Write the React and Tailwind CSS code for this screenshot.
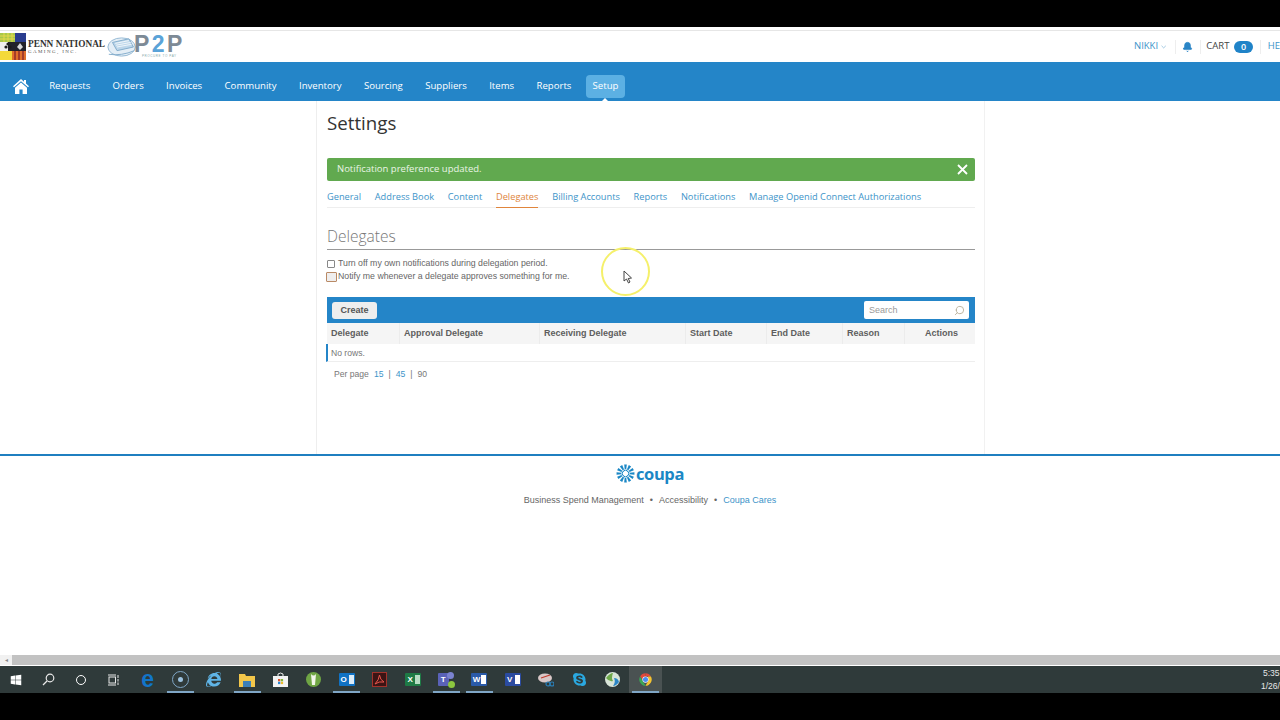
import { Bell, ChevronDown, Search } from 'lucide-react';
import { FaWindows, FaInternetExplorer, FaSkype } from 'react-icons/fa';

const navItems = ['Requests', 'Orders', 'Invoices', 'Community', 'Inventory', 'Sourcing', 'Suppliers', 'Items', 'Reports'];
const tabs = ['General', 'Address Book', 'Content', 'Delegates', 'Billing Accounts', 'Reports', 'Notifications', 'Manage Openid Connect Authorizations'];
const columns = [
  ['Delegate', 'w-[73px]'],
  ['Approval Delegate', 'w-[140px]'],
  ['Receiving Delegate', 'w-[146px]'],
  ['Start Date', 'w-[81px]'],
  ['End Date', 'w-[76px]'],
  ['Reason', 'w-[62px]'],
];

function PennLogo() {
  return (
    <svg width="26" height="27" viewBox="0 0 26 27" className="shrink-0">
      <rect width="26" height="27" fill="#f4d93a" />
      <rect x="0" y="0" width="15" height="9" fill="#a8c84a" />
      <path d="M0 3 H15 M0 6 H15 M4 0 V9 M8 0 V9 M12 0 V9" stroke="#e6d84a" strokeWidth="1" />
      <rect x="15" y="0" width="11" height="9" fill="#2a3d8f" />
      <path d="M0 9 H8 L13 18 H0 Z" fill="#f0f0f0" />
      <rect x="8" y="9" width="18" height="9" fill="#22222a" />
      <circle cx="8" cy="11" r="1.6" fill="#1c1c1c" />
      <circle cx="6" cy="14" r="1.6" fill="#1c1c1c" />
      <circle cx="10" cy="14" r="1.6" fill="#1c1c1c" />
      <path d="M20 10 L23 14 L20 17 L17 14 Z" fill="#d8d8d8" />
      <path d="M12 18 H26 V27 H12 Z" fill="#e0702a" />
      <path d="M15 18 V27 M19 18 V27 M23 18 V27" stroke="#8e2a2a" strokeWidth="1.4" />
    </svg>
  );
}

function P2PLogo() {
  return (
    <svg width="31" height="24" viewBox="0 0 34 24" className="shrink-0">
      <ellipse cx="16" cy="12" rx="15" ry="10" fill="#e4eef6" stroke="#8fb5d2" strokeWidth="1" />
      <path d="M6 7 L24 3 L29 12 L11 16 Z" fill="#bcd6ea" stroke="#7ea9c9" strokeWidth="1" />
      <path d="M9 8 L24 5 M10 10 L26 7 M11 12 L27 9" stroke="#f4f8fb" strokeWidth="1" />
      <path d="M2 20 Q16 22 30 16" fill="none" stroke="#7ea9c9" strokeWidth="1" />
    </svg>
  );
}

function CoupaMark() {
  const spokes = [0, 30, 60, 90, 120, 150, 180, 210, 240, 270, 300, 330];
  return (
    <svg width="19" height="19" viewBox="0 0 20 20" className="shrink-0">
      {spokes.map((a) => (
        <path key={a} d="M8.6 0.6 L11.4 0.6 L10.8 5.6 L9.2 5.6 Z" fill="#1b87c5" transform={`rotate(${a} 10 10)`} />
      ))}
      {spokes.map((a) => (
        <circle key={a} cx="10" cy="6.6" r="0.8" fill="#1b87c5" transform={`rotate(${a + 15} 10 10)`} />
      ))}
    </svg>
  );
}

function TaskIcon({ active, open, children }) {
  return (
    <div className={`relative flex h-full w-[33.2px] items-center justify-center ${active ? 'bg-[#4a5252]' : ''}`}>
      {children}
      {open && <div className="absolute bottom-0 left-[3px] right-[3px] h-[2px] bg-[#7fa6c6]" />}
    </div>
  );
}

function OfficeTile({ bg, letter, side = '#ffffff' }) {
  return (
    <div className="flex h-[13px] w-[16px] items-center overflow-hidden rounded-[1px]" style={{ background: bg }}>
      <span className="w-[10px] text-center text-[8px] leading-none font-bold text-white">{letter}</span>
      <div className="h-[9px] w-[5px]" style={{ background: side }} />
    </div>
  );
}

export default function App() {
  return (
    <div className="flex h-[720px] w-[1280px] flex-col overflow-hidden bg-black font-['Liberation_Sans',sans-serif]">
      <div className="h-[27px] shrink-0" />

      <div className="relative flex h-[628px] shrink-0 flex-col bg-white">
        {/* Top header */}
        <div className="mt-[3px] flex h-[32px] shrink-0 items-center justify-between overflow-hidden border-t border-[#e6e6e6]">
          <div className="flex items-center">
            <PennLogo />
            <div className="ml-[2px] flex w-[79px] flex-col">
              <span className="font-['Liberation_Serif',serif] text-[9.3px] leading-[10px] font-bold whitespace-nowrap text-[#333]">PENN NATIONAL</span>
              <span className="font-['Liberation_Serif',serif] text-[5px] leading-[6px] tracking-[1.4px] whitespace-nowrap text-[#555]">GAMING, INC.</span>
            </div>
            <P2PLogo />
            <div className="ml-[-4px] flex flex-col items-center">
              <div className="flex text-[23px] leading-[19px] font-bold tracking-[2.4px] whitespace-nowrap">
                <span className="text-[#7d8a96]">P</span>
                <span className="text-[#5aa3d8]">2</span>
                <span className="text-[#7d8a96]">P</span>
              </div>
              <span className="text-[3px] leading-[4px] tracking-[0.6px] whitespace-nowrap text-[#8aa]">PROCURE TO PAY</span>
            </div>
          </div>
          <div className="flex w-[146px] shrink-0 items-center font-['Open_Sans',sans-serif] text-[9.5px]">
            <span className="text-[#3d94c9]">NIKKI</span>
            <ChevronDown className="ml-[2px] h-[8px] w-[8px] text-[#6aa8d0]" />
            <div className="ml-[8px] h-[14px] w-px bg-[#eeeeee]" />
            <Bell className="ml-[6px] h-[12px] w-[12px] text-[#2a85c6]" fill="#2a85c6" />
            <div className="ml-[7px] h-[14px] w-px bg-[#eeeeee]" />
            <span className="ml-[5px] text-[#444]">CART</span>
            <span className="ml-[5px] flex h-[12px] w-[20px] items-center justify-center rounded-[6px] bg-[#1f83c8] text-[9px] leading-none font-semibold text-white">0</span>
            <div className="ml-[7px] h-[14px] w-px bg-[#eeeeee]" />
            <span className="ml-[7px] text-[#3d94c9]">HE</span>
          </div>
        </div>

        {/* Nav */}
        <div className="flex h-[39px] shrink-0 items-center bg-[#2485c8] pt-[9px] font-['Open_Sans',sans-serif] text-[9.6px] text-white">
          <svg width="16" height="15" viewBox="0 0 16 15" className="ml-[13px] shrink-0" fill="#fff">
            <path d="M8 0 L11 2.7 V1 H13 V4.5 L16 7.3 L15 8.2 L8 2.2 L1 8.2 L0 7.3 Z" />
            <path d="M8 3.6 L14 8.7 V15 H9.6 V10.5 H6.4 V15 H2 V8.7 Z" />
          </svg>
          <div className="ml-[9px] flex items-center">
            {navItems.map((item) => (
              <span key={item} className="px-[11.2px] whitespace-nowrap">{item}</span>
            ))}
            <div className="relative ml-[3px] flex h-[23px] items-center rounded-[4px] bg-[#5cb0e3] px-[7px]">
              Setup
              <div className="absolute bottom-[-4px] left-1/2 h-0 w-0 -translate-x-1/2 border-x-[4px] border-b-[4px] border-x-transparent border-b-white" />
            </div>
          </div>
        </div>

        {/* Page */}
        <div className="flex h-[353px] shrink-0">
          <div className="w-[317px] shrink-0 border-r border-[#eeeeee]" />
          <div className="w-[668px] shrink-0 border-r border-[#f1f1f1] pr-[9px] pl-[10px]">
            <h1 className="mt-[10px] font-['Open_Sans',sans-serif] text-[18.7px] leading-[24px] text-[#333]">Settings</h1>

            <div className="mt-[23px] flex h-[23px] items-center justify-between rounded-[2px] bg-[#61a94f] pr-[7px] pl-[10px] font-['Open_Sans',sans-serif] text-[9.5px] text-[#eaf5e6]">
              Notification preference updated.
              <svg width="11" height="11" viewBox="0 0 11 11"><path d="M1 1 L10 10 M10 1 L1 10" stroke="#fff" strokeWidth="1.8" /></svg>
            </div>

            <div className="mt-[7px] flex h-[20px] gap-[13.7px] border-b border-[#eeeeee] font-['Open_Sans',sans-serif] text-[9.25px] text-[#3d94c9]">
              {tabs.map((t) => (
                <span key={t} className={`h-[20px] leading-[18px] whitespace-nowrap ${t === 'Delegates' ? 'border-b border-[#e0853c] text-[#e0853c]' : ''}`}>{t}</span>
              ))}
            </div>

            <h2 className="mt-[18px] border-b border-[#999] pb-[3px] font-['Open_Sans',sans-serif] text-[15.5px] leading-[20px] font-light text-[#777]">Delegates</h2>

            <div className="mt-[7px] flex h-[13px] items-center text-[8.75px] text-[#666]">
              <span className="h-[8px] w-[8px] rounded-[1px] border border-[#888] bg-white" />
              <span className="ml-[3px]">Turn off my own notifications during delegation period.</span>
            </div>
            <div className="flex h-[13px] items-center text-[8.75px] text-[#666]">
              <span className="ml-[-1px] h-[10px] w-[11px] rounded-[1px] border border-[#b98a66] bg-[#efeeee]" />
              <span className="ml-px">Notify me whenever a delegate approves something for me.</span>
            </div>

            {/* Table */}
            <div className="mt-[14px] flex h-[26px] items-center justify-between bg-[#2485c8] pr-[6px] pl-[5px]">
              <div className="flex h-[17px] w-[45px] items-center justify-center rounded-[3px] bg-[#eeeeee] pt-px text-[9px] font-bold text-[#555]">Create</div>
              <div className="flex h-[18px] w-[105px] items-center justify-between rounded-[2px] bg-white pt-px pr-[4px] pl-[5px] text-[9px] text-[#999]">
                Search
                <Search className="h-[11px] w-[11px] -scale-x-100 text-[#b9b09a]" />
              </div>
            </div>
            <div className="flex h-[21px] bg-[#f5f5f5] text-[9px] font-bold text-[#5e5e5e]">
              {columns.map(([name, w]) => (
                <div key={name} className={`flex items-center border-r border-[#ececec] pt-px pl-[4px] ${w}`}>{name}</div>
              ))}
              <div className="flex flex-1 items-center justify-center pt-px pl-[3px]">Actions</div>
            </div>
            <div className="ml-[-1px] flex h-[18px] items-center border-b border-l-2 border-[#eeeeee] border-l-[#2485c8] pt-px pl-[3px] text-[8.6px] text-[#777]">No rows.</div>
            <div className="mt-[6px] flex items-center pl-[7px] text-[8.6px] text-[#777]">
              Per page
              <span className="ml-[5px] text-[#3d94c9]">15</span>
              <span className="mx-[5px]">|</span>
              <span className="text-[#3d94c9]">45</span>
              <span className="mx-[5px]">|</span>
              90
            </div>
          </div>
          <div className="flex-1" />
        </div>

        {/* Footer */}
        <div className="flex flex-1 flex-col items-center border-t-2 border-[#1f7fc0] pl-[20px]">
          <div className="mt-[8px] flex h-[19px] items-center gap-px">
            <CoupaMark />
            <span className="font-['Open_Sans',sans-serif] text-[16.5px] leading-[19px] font-bold tracking-[-0.4px] text-[#1b87c5]">coupa</span>
          </div>
          <div className="mt-[11px] flex items-center text-[9px] text-[#666]">
            Business Spend Management
            <span className="mx-[6px]">•</span>
            Accessibility
            <span className="mx-[6px]">•</span>
            <span className="text-[#3d94c9]">Coupa Cares</span>
          </div>
        </div>

        {/* Recording highlight and pointer */}
        <div className="absolute top-[220px] left-[601px] h-[49px] w-[49px] rounded-full border-2 border-[#f5f06a]" />
        <svg width="10" height="14" viewBox="0 0 10 14" className="absolute top-[243px] left-[623px]">
          <path d="M1 1 L1 11 L3.5 9 L5.5 13 L7 12 L5.2 8.5 L8.5 8 Z" fill="#fff" stroke="#444" strokeWidth="1" />
        </svg>
      </div>

      {/* Scrollbar */}
      <div className="flex h-[11px] shrink-0 items-center border-b border-white bg-[#f1f1f1]">
        <div className="flex w-[12px] justify-center text-[6px] text-[#888]">◂</div>
        <div className="h-full flex-1 bg-[#c2c2c2]" />
      </div>

      {/* Taskbar */}
      <div className="flex h-[27px] shrink-0 items-center justify-between bg-[#2f3a3a]">
        <div className="flex h-full items-center">
          <div className="flex h-full w-[32px] items-center justify-center"><FaWindows className="h-[12px] w-[12px] text-white" /></div>
          <div className="flex h-full w-[33px] items-center justify-center">
            <svg width="13" height="13" viewBox="0 0 13 13" fill="none" stroke="#e8e8e8" strokeWidth="1.2"><circle cx="8" cy="5" r="3.8" /><path d="M5 8 L1 12" /></svg>
          </div>
          <div className="flex h-full w-[32px] items-center justify-center"><div className="h-[10px] w-[10px] rounded-full border-[1.5px] border-white" /></div>
          <div className="flex h-full w-[32px] items-center justify-center">
            <svg width="12" height="12" viewBox="0 0 12 12" fill="none" stroke="#e8e8e8" strokeWidth="1"><rect x="2" y="3" width="6.5" height="6" /><path d="M1 1 H9 M1 11 H9 M11 1 V4 M11 5 V7.5 M11 8.5 V11" /></svg>
          </div>
          <div className="w-[2px]" />
          <TaskIcon><span className="text-[23px] leading-none font-bold text-[#1275c9]">e</span></TaskIcon>
          <TaskIcon open>
            <div className="flex h-[17px] w-[17px] items-center justify-center rounded-full border border-[#7fa6c6]"><div className="h-[5px] w-[5px] rounded-full bg-[#9cc2e0]" /></div>
          </TaskIcon>
          <TaskIcon><FaInternetExplorer className="h-[15px] w-[15px] text-[#5fb4e6]" /></TaskIcon>
          <TaskIcon open>
            <svg width="16" height="14" viewBox="0 0 16 14"><path d="M0 1 H6 L7 3 H16 V14 H0 Z" fill="#f2c64a" /><rect x="4" y="8" width="8" height="6" fill="#3c7fb8" /></svg>
          </TaskIcon>
          <TaskIcon>
            <svg width="15" height="15" viewBox="0 0 15 15"><path d="M5 4 V2 Q7.5 0 10 2 V4" fill="none" stroke="#eee" /><rect x="0" y="4" width="15" height="11" fill="#f3f3f3" /><rect x="5" y="7" width="2.3" height="2.3" fill="#e0552c" /><rect x="7.8" y="7" width="2.3" height="2.3" fill="#7fb83a" /><rect x="5" y="9.8" width="2.3" height="2.3" fill="#2c8ad6" /><rect x="7.8" y="9.8" width="2.3" height="2.3" fill="#f2bb2c" /></svg>
          </TaskIcon>
          <TaskIcon>
            <svg width="15" height="15" viewBox="0 0 15 15"><circle cx="7.5" cy="7.5" r="7.5" fill="#6fa544" /><path d="M5 2 Q7.5 5 10 2 L9 13 H6 Z" fill="#f2f6ea" /></svg>
          </TaskIcon>
          <TaskIcon open><OfficeTile bg="#1072c4" letter="O" side="#dcecf8" /></TaskIcon>
          <TaskIcon>
            <div className="flex h-[15px] w-[15px] items-center justify-center border border-[#a3322b] bg-[#3c1414]">
              <svg width="11" height="11" viewBox="0 0 11 11" fill="none" stroke="#e8564c" strokeWidth="1"><path d="M1 10 Q5 6 5.5 1 Q6 6 10 8 Q5 7 1 10 Z" /></svg>
            </div>
          </TaskIcon>
          <TaskIcon><OfficeTile bg="#1e7a45" letter="X" side="#b7dcc4" /></TaskIcon>
          <TaskIcon open>
            <div className="relative flex h-[15px] w-[17px] items-center justify-start">
              <div className="flex h-[13px] w-[11px] items-center justify-center rounded-[1px] bg-[#5a62b8] text-[8px] leading-none font-bold text-white">T</div>
              <div className="absolute top-0 right-[1px] h-[7px] w-[7px] rounded-full bg-[#7b83d0]" />
              <div className="absolute right-0 bottom-[-1px] h-[7px] w-[7px] rounded-full bg-[#8cc63f]" />
            </div>
          </TaskIcon>
          <TaskIcon open><OfficeTile bg="#2a5aa8" letter="W" /></TaskIcon>
          <TaskIcon><OfficeTile bg="#2b4ba0" letter="V" /></TaskIcon>
          <TaskIcon>
            <svg width="16" height="14" viewBox="0 0 16 14"><ellipse cx="7" cy="5" rx="7" ry="4.5" fill="#d9c8c8" /><path d="M3 5 L12 2" stroke="#c0392b" strokeWidth="1.2" /><circle cx="10" cy="11" r="2" fill="none" stroke="#2a7fb8" strokeWidth="1.2" /><circle cx="14" cy="11" r="2" fill="none" stroke="#2a7fb8" strokeWidth="1.2" /></svg>
          </TaskIcon>
          <TaskIcon><FaSkype className="h-[15px] w-[15px] text-[#2aa8e0]" /></TaskIcon>
          <TaskIcon>
            <svg width="15" height="15" viewBox="0 0 15 15"><circle cx="7.5" cy="7.5" r="7.5" fill="#d8e4d8" /><path d="M1 6 Q5 1 8 1 Q6 6 8 9 Q4 10 1 6 Z" fill="#6ea84a" /><path d="M9 6 Q13 6 14 10 Q11 14 8 14 Q11 10 9 6 Z" fill="#2a85c6" /></svg>
          </TaskIcon>
          <TaskIcon active open>
            <svg width="15" height="15" viewBox="0 0 48 48">
              <path d="M24 4 A20 20 0 0 1 41.3 14 L24 14 Z" fill="#e2483a" />
              <path d="M6.7 14 A20 20 0 0 1 24 4 L24 14 L14 24 Z" fill="#e2483a" />
              <path d="M6.7 14 L16 30 L24 44 A20 20 0 0 1 6.7 14 Z" fill="#3aa757" />
              <path d="M41.3 14 A20 20 0 0 1 24 44 L33 28 L32 14 Z" fill="#f4c431" />
              <circle cx="24" cy="24" r="10" fill="#fff" />
              <circle cx="24" cy="24" r="8" fill="#4a8df0" />
            </svg>
          </TaskIcon>
        </div>
        <div className="flex w-[20px] flex-col text-[8.5px] leading-[13px] whitespace-nowrap text-[#e8e8e8]">
          <span className="ml-[3px]">5:35</span>
          <span className="ml-px">1/26/</span>
        </div>
      </div>

      <div className="flex-1" />
    </div>
  );
}
